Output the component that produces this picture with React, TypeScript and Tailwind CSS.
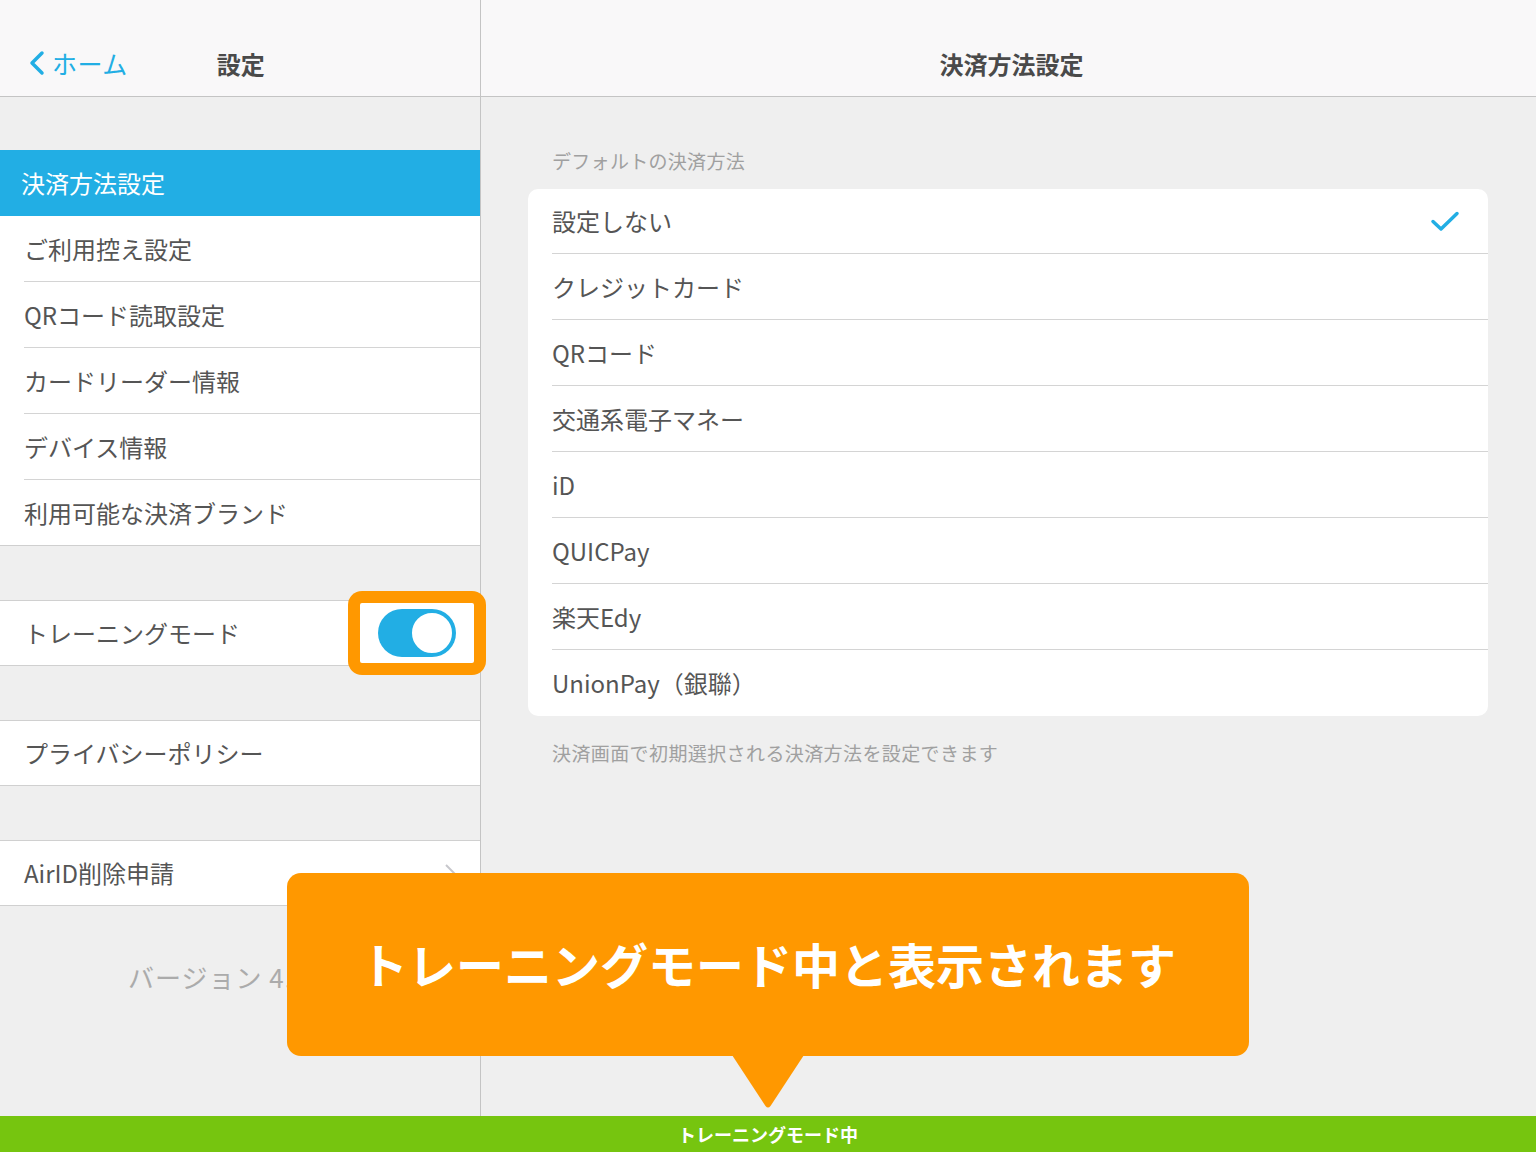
import React from "react";

const FONT = { fontFamily: '"Noto Sans CJK JP", "Noto Sans", sans-serif' };

function Row({ label, last, children }: { label: string; last?: boolean; children?: React.ReactNode }) {
  return (
    <div className="relative h-[66px] bg-white flex flex-col">
      <div className="flex-1 flex items-center pl-6 text-[24px] text-[#555555]">{label}</div>
      {children}
      <div className={last ? "h-px bg-[#cfcfcf]" : "h-px bg-[#d4d4d4] ml-6"} />
    </div>
  );
}

function CardRow({ label, last, checked }: { label: string; last?: boolean; checked?: boolean }) {
  return (
    <div className={checked ? "h-[65px] flex flex-col" : "h-[66px] flex flex-col"}>
      <div className="flex-1 flex items-center justify-between pl-6 pr-7 text-[24px] text-[#555555]">
        <span>{label}</span>
        {checked && (
          <svg width="30" height="22" viewBox="0 0 30 22" fill="none">
            <path d="M3 11.5 L11 19 L27 3.5" stroke="#22aee4" strokeWidth="3.5" strokeLinecap="round" strokeLinejoin="round" />
          </svg>
        )}
      </div>
      {!last && <div className="h-px bg-[#d4d4d4] ml-6" />}
    </div>
  );
}

export default function App() {
  const items = ["ご利用控え設定", "QRコード読取設定", "カードリーダー情報", "デバイス情報", "利用可能な決済ブランド"];
  const methods = ["設定しない", "クレジットカード", "QRコード", "交通系電子マネー", "iD", "QUICPay", "楽天Edy", "UnionPay（銀聯）"];
  return (
    <div className="relative w-[1536px] h-[1152px] overflow-hidden bg-[#efefef] flex flex-col" style={FONT}>
      <div className="flex-1 flex min-h-0">
        {/* Left panel */}
        <div className="w-[481px] border-r border-[#c4c4c4] flex flex-col">
          <div className="h-[97px] bg-[#f9f8f9] border-b border-[#c4c4c4] flex items-end pb-[14px]">
            <div className="flex items-center pl-[28px] text-[#22aee4] text-[25px]">
              <svg width="18" height="26" viewBox="0 0 18 26" fill="none">
                <path d="M14 3 L4 13 L14 23" stroke="#22aee4" strokeWidth="3.5" strokeLinecap="round" strokeLinejoin="round" />
              </svg>
              <span className="ml-[6px] tracking-[0.5px]">ホーム</span>
            </div>
            <div className="ml-[89px] text-[24px] font-bold text-[#4a4a4a]">設定</div>
          </div>
          <div className="h-[53px]" />
          <div className="h-[66px] bg-[#22aee4] flex items-center pl-[21px] text-[24px] text-white">決済方法設定</div>
          {items.map((t, i) => (
            <Row key={t} label={t} last={i === items.length - 1} />
          ))}
          <div className="h-[54px]" />
          <div className="relative border-t border-b border-[#d0d0d0] h-[66px] bg-white flex items-center pl-6 text-[24px] text-[#555555]">
            トレーニングモード
            <div className="absolute left-[348px] top-[-10px] w-[138px] h-[84px] rounded-[14px] bg-[#ff9800] p-[12px]">
              <div className="w-full h-full bg-white rounded-[2px] flex items-center justify-center">
                <div className="w-[78px] h-[48px] rounded-full bg-[#22aee4] flex items-center justify-end pr-[2px]">
                  <div className="w-[44px] h-[44px] rounded-full bg-white border-2 border-[#22aee4]" />
                </div>
              </div>
            </div>
          </div>
          <div className="h-[54px]" />
          <div className="border-t border-b border-[#d0d0d0] h-[66px] bg-white flex items-center pl-6 text-[24px] text-[#555555]">プライバシーポリシー</div>
          <div className="h-[54px]" />
          <div className="border-t border-b border-[#d0d0d0] h-[66px] bg-white flex items-center justify-between pl-6 pr-[24px] text-[24px] text-[#555555]">
            <span>AirID削除申請</span>
            <svg width="12" height="20" viewBox="0 0 12 20" fill="none">
              <path d="M2 2 L10 10 L2 18" stroke="#c7c7cc" strokeWidth="2" />
            </svg>
          </div>
          <div className="pt-[51px] pl-[128px] text-[26px] text-[#ababab] tracking-[1px]">バージョン 4.28.0</div>
        </div>
        {/* Right panel */}
        <div className="flex-1 flex flex-col">
          <div className="h-[97px] bg-[#f9f8f9] border-b border-[#c4c4c4] flex items-end justify-center pb-[14px] pl-[6px]">
            <span className="text-[24px] font-bold text-[#4a4a4a]">決済方法設定</span>
          </div>
          <div className="pl-[47px] pr-[48px]">
            <div className="pt-[52px] pb-[16px] pl-6 text-[19px] tracking-[0.3px] text-[#a0a0a0] leading-[24px]">デフォルトの決済方法</div>
            <div className="bg-white rounded-[10px] overflow-hidden">
              {methods.map((m, i) => (
                <CardRow key={m} label={m} checked={i === 0} last={i === methods.length - 1} />
              ))}
            </div>
            <div className="pt-[25px] pl-6 text-[19px] tracking-[0.4px] text-[#a0a0a0] leading-[24px]">決済画面で初期選択される決済方法を設定できます</div>
          </div>
        </div>
      </div>
      {/* Bottom bar */}
      <div className="h-[36px] bg-[#76c50f] flex items-center justify-center text-white text-[18px] font-bold">トレーニングモード中</div>

      {/* Callout */}
      <div className="absolute left-[287px] top-[873px] w-[962px] h-[183px] rounded-[14px] bg-[#ff9800] flex items-center justify-center pb-[4px]">
        <span className="text-white text-[48px] font-bold">トレーニングモード中と表示されます</span>
      </div>
      <svg className="absolute left-[732px] top-[1055px]" width="72" height="54" viewBox="0 0 72 54">
        <path d="M0 0 L72 0 L38.5 51 Q36 54 33.5 51 Z" fill="#ff9800" />
      </svg>
    </div>
  );
}
